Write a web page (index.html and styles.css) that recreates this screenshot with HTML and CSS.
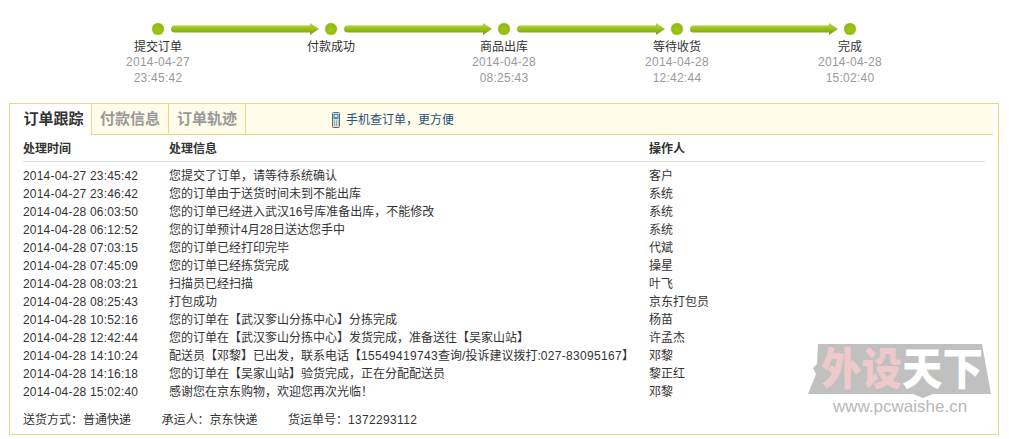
FILE: index.html
```html
<!DOCTYPE html>
<html lang="zh">
<head>
<meta charset="utf-8">
<title>订单跟踪</title>
<link rel="stylesheet" href="styles.css">
</head>
<body>
<div class="track">
  <span class="dot"></span>
  <svg class="arrow" viewBox="0 0 148 12"><defs><linearGradient id="g" x1="0" y1="0" x2="0" y2="1"><stop offset="0" stop-color="#b5d23c"/><stop offset=".35" stop-color="#a5c825"/><stop offset=".75" stop-color="#86ae12"/><stop offset="1" stop-color="#79a00c"/></linearGradient></defs><path d="M3.5 2.5H139V0L148 6 139 12V9.5H3.5A3.5 3.5 0 0 1 3.5 2.5Z" fill="url(#g)"/></svg>
  <span class="dot"></span>
  <svg class="arrow" viewBox="0 0 148 12"><path d="M3.5 2.5H139V0L148 6 139 12V9.5H3.5A3.5 3.5 0 0 1 3.5 2.5Z" fill="url(#g)"/></svg>
  <span class="dot"></span>
  <svg class="arrow" viewBox="0 0 148 12"><path d="M3.5 2.5H139V0L148 6 139 12V9.5H3.5A3.5 3.5 0 0 1 3.5 2.5Z" fill="url(#g)"/></svg>
  <span class="dot"></span>
  <svg class="arrow" viewBox="0 0 148 12"><path d="M3.5 2.5H139V0L148 6 139 12V9.5H3.5A3.5 3.5 0 0 1 3.5 2.5Z" fill="url(#g)"/></svg>
  <span class="dot"></span>
</div>
<div class="steps">
  <div class="step"><div class="step-name">提交订单</div><div class="step-time">2014-04-27<br>23:45:42</div></div>
  <div class="step"><div class="step-name">付款成功</div></div>
  <div class="step"><div class="step-name">商品出库</div><div class="step-time">2014-04-28<br>08:25:43</div></div>
  <div class="step"><div class="step-name">等待收货</div><div class="step-time">2014-04-28<br>12:42:44</div></div>
  <div class="step"><div class="step-name">完成</div><div class="step-time">2014-04-28<br>15:02:40</div></div>
</div>
<div class="panel">
  <div class="tabs">
    <div class="tab tab-active">订单跟踪</div>
    <div class="tab">付款信息</div>
    <div class="tab">订单轨迹</div>
    <div class="mobile">
      <svg class="phone" viewBox="0 0 8 16"><rect x=".5" y=".5" width="7" height="15" rx="1" fill="#d8dcdf" stroke="#666"/><rect x="1.5" y="2" width="5" height="5" fill="#3a8fd8"/><rect x="2.5" y="3" width="3" height="2" fill="#cfe8fb"/><path d="M2 9h1M4 9h1M6 9h.5" stroke="#5a5"/><path d="M2 11h1M4 11h1M6 11h.5M2 13h1M4 13h1M6 13h.5" stroke="#777"/></svg>
      <span>手机查订单，更方便</span>
    </div>
  </div>
  <div class="log">
    <div class="row row-head"><span>处理时间</span><span>处理信息</span><span>操作人</span></div>
    <div class="rows">
      <div class="row"><span class="date">2014-04-27 23:45:42</span><span>您提交了订单，请等待系统确认</span><span>客户</span></div>
      <div class="row"><span class="date">2014-04-27 23:46:42</span><span>您的订单由于送货时间未到不能出库</span><span>系统</span></div>
      <div class="row"><span class="date">2014-04-28 06:03:50</span><span>您的订单已经进入武汉16号库准备出库，不能修改</span><span>系统</span></div>
      <div class="row"><span class="date">2014-04-28 06:12:52</span><span>您的订单预计4月28日送达您手中</span><span>系统</span></div>
      <div class="row"><span class="date">2014-04-28 07:03:15</span><span>您的订单已经打印完毕</span><span>代斌</span></div>
      <div class="row"><span class="date">2014-04-28 07:45:09</span><span>您的订单已经拣货完成</span><span>操星</span></div>
      <div class="row"><span class="date">2014-04-28 08:03:21</span><span>扫描员已经扫描</span><span>叶飞</span></div>
      <div class="row"><span class="date">2014-04-28 08:25:43</span><span>打包成功</span><span>京东打包员</span></div>
      <div class="row"><span class="date">2014-04-28 10:52:16</span><span>您的订单在【武汉奓山分拣中心】分拣完成</span><span>杨苗</span></div>
      <div class="row"><span class="date">2014-04-28 12:42:44</span><span>您的订单在【武汉奓山分拣中心】发货完成，准备送往【吴家山站】</span><span>许孟杰</span></div>
      <div class="row"><span class="date">2014-04-28 14:10:24</span><span>配送员【邓黎】已出发，联系电话【<span class="num">15549419743</span>查询/投诉建议拨打:<span class="num">027-83095167</span>】</span><span>邓黎</span></div>
      <div class="row"><span class="date">2014-04-28 14:16:18</span><span>您的订单在【吴家山站】验货完成，正在分配配送员</span><span>黎正红</span></div>
      <div class="row"><span class="date">2014-04-28 15:02:40</span><span>感谢您在京东购物，欢迎您再次光临！</span><span>邓黎</span></div>
    </div>
    <div class="ship"><span>送货方式：普通快递</span><span>承运人：京东快递</span><span>货运单号：<span class="num">1372293112</span></span></div>
  </div>
</div>
<div class="mark">
  <svg class="mark-bg" viewBox="0 0 183 54"><path d="M10 0H174L183 50H125L115 54 105 50H0L8 30 5 24 9 20Z" fill="#c0c0c0"/></svg>
  <div class="mark-title"><span class="mark-red">外设</span><span class="mark-white">天下</span></div>
  <div class="mark-url">www.pcwaishe.cn</div>
</div>
</body>
</html>
```
FILE: styles.css
```css
html, body { margin: 0; padding: 0; }
body {
  position: relative;
  width: 1009px;
  height: 439px;
  overflow: hidden;
  background: #fff;
  color: #333;
  font: 12px/18px "Liberation Sans", "Noto Sans CJK SC", sans-serif;
}
.track {
  display: flex;
  align-items: center;
  gap: 6.5px;
  padding: 21px 0 0 152px;
  height: 16px;
}
.dot {
  flex: none;
  width: 12px;
  height: 12px;
  border-radius: 50%;
  background: radial-gradient(circle at 50% 55%, #9fc61a 0, #93bd12 55%, #78a30c 100%);
  box-shadow: 0 0 1px #b9d45a;
}
.arrow { flex: none; width: 148px; height: 12px; }
.steps {
  display: flex;
  margin-left: 71.5px;
  padding-top: 2px;
}
.step {
  width: 173px;
  text-align: center;
}
.step-name { line-height: 16px; color: #333; }
.step-time { color: #999; line-height: 15.5px; letter-spacing: .25px; }
.panel {
  box-sizing: border-box;
  width: 990px;
  height: 332px;
  margin: 17px 0 0 9px;
  border: 1px solid #edd97c;
}
.tabs {
  display: flex;
  height: 30px;
  margin-right: 5px;
  background: #fffcea;
  border-bottom: 1px solid #edd97c;
}
.tab {
  box-sizing: border-box;
  width: 77px;
  border-right: 1px solid #edd97c;
  text-align: center;
  font-size: 15px;
  font-weight: bold;
  line-height: 29px;
  color: #999;
}
.tab-active {
  width: 82px;
  height: 31px;
  padding-left: 6px;
  background: #fff;
  color: #333;
}
.mobile {
  display: flex;
  align-items: center;
  gap: 6px;
  margin-left: 86px;
  padding-top: 2px;
  color: #1f4f82;
}
.phone { width: 8px; height: 16px; }
.log { padding: 5px 13px 0 13px; }
.row {
  display: grid;
  grid-template-columns: 146px 480px 1fr;
  height: 18px;
  white-space: nowrap;
}
.row-head {
  height: 21px;
  font-weight: bold;
  border-bottom: 1px solid #ddd;
}
.rows { padding-top: 5px; }
.date { letter-spacing: .2px; }
.num { letter-spacing: .33px; }
.ship {
  display: flex;
  gap: 30.5px;
  margin-top: 10px;
}
.mark {
  position: absolute;
  left: 808px;
  top: 344px;
  width: 183px;
  height: 70px;
}
.mark-bg { position: absolute; left: 0; top: 0; width: 183px; height: 54px; }
.mark-title {
  position: absolute;
  left: 13px;
  top: 0;
  font-size: 44px;
  line-height: 52px;
  font-weight: 900;
  white-space: nowrap;
  transform: scaleX(.92);
  transform-origin: left top;
}
.mark-red { color: #eec9c9; }
.mark-white { color: #fff; }
.mark-url {
  position: absolute;
  left: 25px;
  top: 54px;
  font-size: 17px;
  line-height: 18px;
  color: #b8b8b8;
}
```
